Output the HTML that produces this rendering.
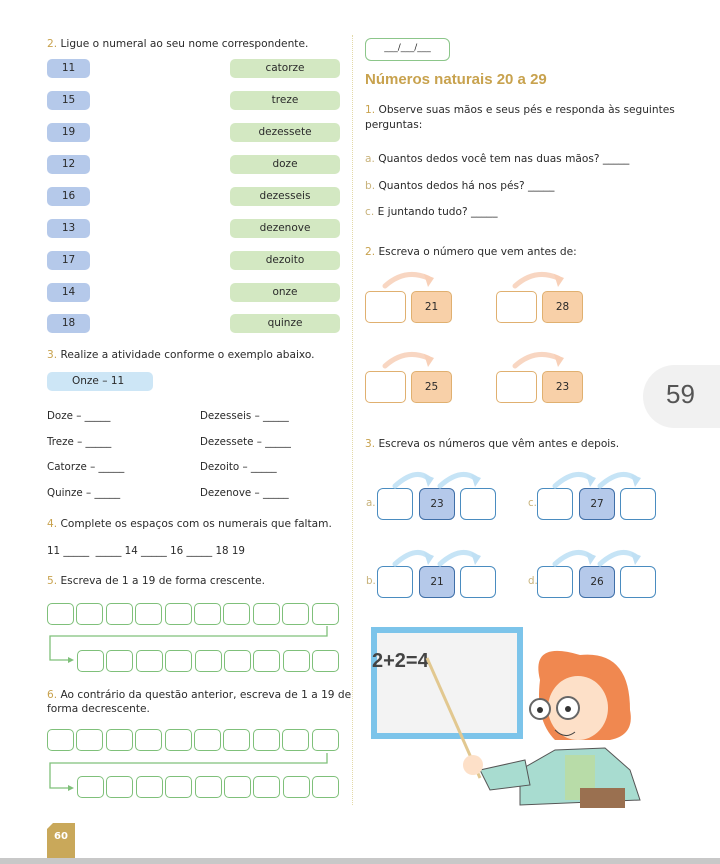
<!DOCTYPE html>
<html><head><meta charset="utf-8"><style>
*{margin:0;padding:0;box-sizing:border-box}
body{width:720px;height:864px;background:#fff;position:relative;overflow:hidden;font-family:"DejaVu Sans","Liberation Sans",sans-serif;color:#2a2a2a;font-size:10.3px}
.a{position:absolute;white-space:nowrap}
.n{color:#c8a24e}
.bp{position:absolute;width:43px;height:19px;background:#b5c9ea;border-radius:5px;text-align:center;line-height:19px;font-size:10.5px}
.gp{position:absolute;left:230px;width:110px;height:19px;background:#d3e8c2;border-radius:5px;text-align:center;line-height:19px;font-size:10.5px}
.gb{position:absolute;width:27px;height:22px;border:1.4px solid #7fc07a;border-radius:5px;background:#fff}
.ob{position:absolute;width:41px;height:32px;border:1.2px solid #e0b070;border-radius:5px;background:#fff;text-align:center;line-height:30px;font-size:10.5px}
.of{background:#f8d0a8}
.bb{position:absolute;width:36px;height:32px;border:1.3px solid #4a8cc0;border-radius:6px;background:#fff;text-align:center;line-height:30px;font-size:10.5px}
.bf{background:#b5c9ea;border-color:#3f6fa8}
.gl{color:#c8b27a}
.q{font-size:10.6px}
</style></head><body>
<div class="a" style="left:352px;top:35px;height:770px;border-left:1.5px dotted #e3d9a8"></div>

<div class="a q" style="left:47px;top:38px"><span class="n">2.</span> Ligue o numeral ao seu nome correspondente.</div>
<div class="bp" style="left:47px;top:59px">11</div><div class="gp" style="top:59px">catorze</div>
<div class="bp" style="left:47px;top:91px">15</div><div class="gp" style="top:91px">treze</div>
<div class="bp" style="left:47px;top:123px">19</div><div class="gp" style="top:123px">dezessete</div>
<div class="bp" style="left:47px;top:155px">12</div><div class="gp" style="top:155px">doze</div>
<div class="bp" style="left:47px;top:187px">16</div><div class="gp" style="top:187px">dezesseis</div>
<div class="bp" style="left:47px;top:219px">13</div><div class="gp" style="top:219px">dezenove</div>
<div class="bp" style="left:47px;top:251px">17</div><div class="gp" style="top:251px">dezoito</div>
<div class="bp" style="left:47px;top:283px">14</div><div class="gp" style="top:283px">onze</div>
<div class="bp" style="left:47px;top:314px">18</div><div class="gp" style="top:314px">quinze</div>

<div class="a q" style="left:47px;top:349px"><span class="n">3.</span> Realize a atividade conforme o exemplo abaixo.</div>
<div class="a" style="left:47px;top:372px;width:106px;height:19px;background:#cde6f6;border-radius:5px;font-size:10.5px;line-height:19px;padding-left:25px">Onze – 11</div>
<div class="a" style="left:47px;top:410px">Doze – _____</div><div class="a" style="left:200px;top:410px">Dezesseis – _____</div>
<div class="a" style="left:47px;top:436px">Treze – _____</div><div class="a" style="left:200px;top:436px">Dezessete – _____</div>
<div class="a" style="left:47px;top:461px">Catorze – _____</div><div class="a" style="left:200px;top:461px">Dezoito – _____</div>
<div class="a" style="left:47px;top:487px">Quinze – _____</div><div class="a" style="left:200px;top:487px">Dezenove – _____</div>
<div class="a q" style="left:47px;top:518px"><span class="n">4.</span> Complete os espaços com os numerais que faltam.</div>
<div class="a" style="left:47px;top:545px">11 _____ &nbsp;_____ 14 _____ 16 _____ 18 19</div>
<div class="a q" style="left:47px;top:575px"><span class="n">5.</span> Escreva de 1 a 19 de forma crescente.</div>
<div class="a q" style="left:47px;top:688px;line-height:14px"><span class="n">6.</span> Ao contrário da questão anterior, escreva de 1 a 19 de<br>forma decrescente.</div>

<svg class="a" style="left:0;top:0" width="360" height="864">
<g fill="none" stroke="#7fc07a" stroke-width="1.3">
<path d="M327 626V636H50V660H70"/><path d="M327 753V763H50V788H70"/>
</g>
<path d="M68 657L74 660L68 663Z M68 785L74 788L68 791Z" fill="#7fc07a"/>
</svg>
<div id="rows"></div>
<script>
var h='';
function row(y,x0,n){for(var i=0;i<n;i++)h+='<div class="gb" style="left:'+(x0+i*29.4)+'px;top:'+y+'px"></div>';}
row(603,47,10);row(650,77,9);row(729,47,10);row(776,77,9);
document.getElementById('rows').innerHTML=h;
</script>

<div class="a" style="left:47px;top:823px;width:28px;height:37px;background:#c9a85a;clip-path:polygon(6px 0,100% 0,100% 100%,0 100%,0 6px);color:#fff;font-weight:bold;font-size:10px;text-align:center;padding-top:8px">60</div>
<div class="a" style="left:0;top:858px;width:720px;height:6px;background:#c8c8c8"></div>

<div class="a" style="left:365px;top:38px;width:85px;height:23px;border:1.3px solid #8cc68a;border-radius:6px;text-align:center;line-height:19px;font-size:9px">___/___/___</div>
<div class="a" style="left:365px;top:71px;font-size:15px;font-weight:bold;color:#c8a24e;font-family:'Liberation Sans',sans-serif">Números naturais 20 a 29</div>
<div class="a q" style="left:365px;top:103px;line-height:15px"><span class="n">1.</span> Observe suas mãos e seus pés e responda às seguintes<br>perguntas:</div>
<div class="a q" style="left:365px;top:153px"><span class="gl">a.</span> Quantos dedos você tem nas duas mãos? _____</div>
<div class="a q" style="left:365px;top:180px"><span class="gl">b.</span> Quantos dedos há nos pés? _____</div>
<div class="a q" style="left:365px;top:206px"><span class="gl">c.</span> E juntando tudo? _____</div>
<div class="a q" style="left:365px;top:246px"><span class="n">2.</span> Escreva o número que vem antes de:</div>

<div class="ob" style="left:365px;top:291px"></div><div class="ob of" style="left:411px;top:291px">21</div>
<div class="ob" style="left:496px;top:291px"></div><div class="ob of" style="left:542px;top:291px">28</div>
<div class="ob" style="left:365px;top:371px"></div><div class="ob of" style="left:411px;top:371px">25</div>
<div class="ob" style="left:496px;top:371px"></div><div class="ob of" style="left:542px;top:371px">23</div>

<div class="a" style="left:643px;top:365px;width:80px;height:63px;background:#f1f1f1;border-radius:32px 0 0 32px"></div>
<div class="a" style="left:666px;top:379px;font-size:26px;color:#555;font-family:'Liberation Sans',sans-serif">59</div>

<div class="a q" style="left:365px;top:438px"><span class="n">3.</span> Escreva os números que vêm antes e depois.</div>
<div class="a gl" style="left:366px;top:497px">a.</div>
<div class="bb" style="left:377px;top:488px"></div><div class="bb bf" style="left:419px;top:488px">23</div><div class="bb" style="left:460px;top:488px"></div>
<div class="a gl" style="left:528px;top:497px">c.</div>
<div class="bb" style="left:537px;top:488px"></div><div class="bb bf" style="left:579px;top:488px">27</div><div class="bb" style="left:620px;top:488px"></div>
<div class="a gl" style="left:366px;top:575px">b.</div>
<div class="bb" style="left:377px;top:566px"></div><div class="bb bf" style="left:419px;top:566px">21</div><div class="bb" style="left:460px;top:566px"></div>
<div class="a gl" style="left:528px;top:575px">d.</div>
<div class="bb" style="left:537px;top:566px"></div><div class="bb bf" style="left:579px;top:566px">26</div><div class="bb" style="left:620px;top:566px"></div>

<svg class="a" style="left:340px;top:260px" width="380" height="340">
<g fill="none" stroke-width="5" stroke-linecap="round">
<path d="M45 26Q65 8 88 18" stroke="#f8d6c2"/><path d="M175 26Q195 8 218 18" stroke="#f8d6c2"/>
<path d="M45 106Q65 88 88 98" stroke="#f8d6c2"/><path d="M175 106Q195 88 218 98" stroke="#f8d6c2"/>
<g stroke="#c6e4f6">
<path d="M55 226Q75 208 88 218"/><path d="M100 226Q120 208 135 218"/>
<path d="M215 226Q235 208 250 218"/><path d="M260 226Q280 208 295 218"/>
<path d="M55 304Q75 286 88 296"/><path d="M100 304Q120 286 135 296"/>
<path d="M215 304Q235 286 250 296"/><path d="M260 304Q280 286 295 296"/>
</g></g>
<g fill="#f8d0b8"><path d="M84 14L94 18L88 27Z"/><path d="M214 14L224 18L218 27Z"/><path d="M84 94L94 98L88 107Z"/><path d="M214 94L224 98L218 107Z"/></g>
<g fill="#c0e0f4"><path d="M84 214L94 218L88 227Z"/><path d="M131 214L141 218L135 227Z"/><path d="M246 214L256 218L250 227Z"/><path d="M291 214L301 218L295 227Z"/>
<path d="M84 292L94 296L88 305Z"/><path d="M131 292L141 296L135 305Z"/><path d="M246 292L256 296L250 305Z"/><path d="M291 292L301 296L295 305Z"/></g>
</svg>

<svg class="a" style="left:340px;top:600px" width="380" height="220">
<rect x="34" y="30" width="146" height="106" fill="#f3f3f3" stroke="#7cc4ea" stroke-width="6"/>
<text x="32" y="67" font-family="Liberation Sans,sans-serif" font-weight="bold" font-size="20" fill="#444">2+2=4</text>
<line x1="87" y1="58" x2="140" y2="178" stroke="#e2c890" stroke-width="3"/>
<path d="M200 80Q190 40 240 55Q290 50 290 110Q295 135 270 140L215 140Q195 120 200 80Z" fill="#f08850"/>
<ellipse cx="238" cy="108" rx="30" ry="32" fill="#fde0c8"/>
<path d="M205 80Q230 55 270 80Q260 65 240 62Q215 62 205 80Z" fill="#f08850"/>
<circle cx="200" cy="109" r="10" fill="#fff" stroke="#666" stroke-width="2"/><circle cx="228" cy="108" r="11" fill="#fff" stroke="#666" stroke-width="2"/>
<circle cx="200" cy="110" r="3" fill="#333"/><circle cx="228" cy="109" r="3" fill="#333"/>
<path d="M215 130Q225 140 235 132" stroke="#444" fill="none"/>
<path d="M180 170L215 150L265 148L290 170L300 200L180 205Z" fill="#a8dcd0" stroke="#555"/>
<path d="M225 155L255 155L255 200L225 200Z" fill="#b8dca8"/>
<path d="M140 170L185 160L190 185L150 190Z" fill="#a8dcd0" stroke="#555"/>
<circle cx="133" cy="165" r="10" fill="#fde0c8"/>
<rect x="240" y="188" width="45" height="20" fill="#9a7050"/>
</svg>
</body></html>
